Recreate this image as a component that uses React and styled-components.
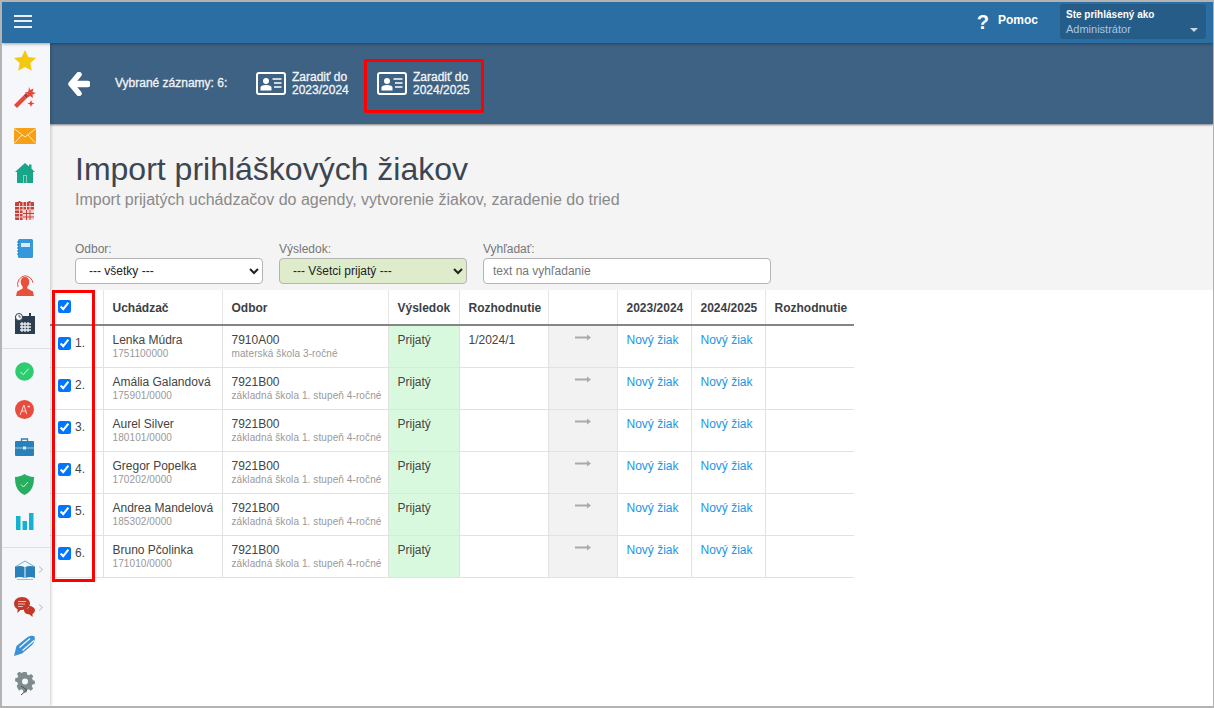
import styled, { createGlobalStyle } from "styled-components";

const GlobalStyle = createGlobalStyle`
    html, body {
        margin: 0;
        padding: 0;
        background: #fff;
        font-family: "Liberation Sans", Arial, sans-serif;
    }
`;

const Frame = styled.div`
    box-sizing: border-box;
    width: 1214px;
    height: 708px;
    border: 2px solid #b3b3b3;
    border-right-width: 1px;
    display: flex;
    flex-direction: column;
    overflow: hidden;
`;

const TopBar = styled.header`
    flex: 0 0 41px;
    background: #2b6ea4;
    display: flex;
    align-items: center;
    padding: 0 7px 0 12px;
    position: relative;
    z-index: 3;
    box-shadow: 0 1px 3px rgba(0, 0, 0, 0.35);
`;

const Burger = styled.div`
    width: 18px;
    display: flex;
    flex-direction: column;
    gap: 3.5px;
    margin-right: auto;
    margin-bottom: 3px;

    span {
        display: block;
        height: 2px;
        background: #e8f0f6;
    }
`;

const Help = styled.div`
    display: flex;
    align-items: center;
    gap: 9px;
    margin: 0 22px 5px 0;
    color: #fff;
    font-size: 12px;
    font-weight: bold;

    b {
        font-size: 20px;
        line-height: 20px;
        margin-top: 3px;
    }
`;

const UserBox = styled.div`
    box-sizing: border-box;
    width: 146px;
    height: 35px;
    margin-bottom: 2px;
    background: #255c88;
    border-radius: 3px;
    padding: 5px 6px;
    position: relative;
`;

const UserLabel = styled.div`
    color: #fff;
    font-size: 10px;
    font-weight: bold;
    line-height: 12px;
`;

const UserName = styled.div`
    color: #a9c6e4;
    font-size: 11px;
    line-height: 14px;
    margin-top: 1px;
`;

const Caret = styled.span`
    position: absolute;
    right: 8px;
    bottom: 7px;
    border-left: 4px solid transparent;
    border-right: 4px solid transparent;
    border-top: 4px solid #c6d6e4;
`;

const Body = styled.div`
    flex: 1;
    display: flex;
    min-height: 0;
`;

const Sidebar = styled.nav`
    flex: 0 0 48px;
    background: #f5f7fa;
    box-shadow: 1px 0 3px rgba(0, 0, 0, 0.2);
    position: relative;
    z-index: 2;
    display: flex;
    flex-direction: column;
    padding-top: 0;
    margin-top: -1px;
`;

const NavGroup = styled.div`
    display: flex;
    flex-direction: column;
    padding: ${(props) => props.$pad};
    border-bottom: ${(props) => (props.$last ? "none" : "1px solid #dcdfe2")};
`;

const NavItem = styled.div`
    height: ${(props) => props.$h || 37.5}px;
    display: flex;
    align-items: center;
    justify-content: center;
    padding-right: 3px;
    position: relative;
`;

const Chevron = styled.span`
    position: absolute;
    left: 35px;
    top: 50%;
    width: 4px;
    height: 4px;
    margin-top: -3px;
    border-top: 1px solid #c4c8cc;
    border-right: 1px solid #c4c8cc;
    transform: rotate(45deg);
`;

const Main = styled.main`
    flex: 1;
    min-width: 0;
    display: flex;
    flex-direction: column;
`;

const ActionBar = styled.div`
    flex: 0 0 81px;
    box-sizing: border-box;
    background: #3e6283;
    box-shadow: 0 1px 2px rgba(0, 0, 0, 0.5);
    position: relative;
    z-index: 1;
    display: flex;
    align-items: center;
    padding-left: 18px;
    color: #fff;
`;

const Selected = styled.div`
    width: 128px;
    font-size: 12px;
    margin-left: 25px;
    color: #f2f5f8;
    padding-bottom: 2px;
    -webkit-text-stroke: 0.3px #f2f5f8;
`;

const ActionButton = styled.div`
    box-sizing: border-box;
    width: 120px;
    height: 54px;
    display: flex;
    align-items: center;
    gap: 6px;
    padding: 0 0 5px 10px;
    margin: 5px 0 0 ${(props) => props.$offset || 0}px;
    border: 3px solid ${(props) => (props.$marked ? "#ff0000" : "transparent")};
    border-radius: 2px;
    font-size: 12px;
    line-height: 13px;
    color: #f2f5f8;
    -webkit-text-stroke: 0.3px #f2f5f8;
`;

const Intro = styled.section`
    flex: 0 0 166px;
    box-sizing: border-box;
    background: #f4f4f4;
    padding: 26px 0 0 25px;
    box-shadow: 0 1px 2px rgba(0, 0, 0, 0.25);
    position: relative;
`;

const Title = styled.h1`
    margin: 0;
    font-size: 32px;
    font-weight: normal;
    line-height: 38px;
    color: #3b4652;
`;

const Subtitle = styled.p`
    margin: 2px 0 0;
    font-size: 16px;
    line-height: 19px;
    color: #8a8a8a;
`;

const Filters = styled.div`
    display: flex;
    gap: 16px;
    margin-top: 33px;
`;

const Field = styled.label`
    display: flex;
    flex-direction: column;
    gap: 2px;
    font-size: 12px;
    line-height: 14px;
    color: #777;
`;

const Select = styled.select`
    box-sizing: border-box;
    width: 188px;
    height: 26px;
    padding-left: 9px;
    border: 1px solid #b4b4b4;
    border-radius: 4px;
    background: ${(props) => props.$bg || "#fff"};
    color: #222;
    font: 12px "Liberation Sans", Arial, sans-serif;
`;

const Search = styled.input`
    box-sizing: border-box;
    width: 288px;
    height: 26px;
    padding: 0 9px;
    border: 1px solid #b4b4b4;
    border-radius: 4px;
    background: #fff;
    font: 12px "Liberation Sans", Arial, sans-serif;

    &::placeholder {
        color: #777;
    }
`;

const TableWrap = styled.div`
    position: relative;
    flex: 1;
    background: #fff;
`;

const RedBox = styled.div`
    position: absolute;
    left: 2px;
    top: 0;
    width: 43px;
    height: 292px;
    box-sizing: border-box;
    border: 3px solid #ff0000;
    pointer-events: none;
`;

const Table = styled.table`
    border-collapse: collapse;
    table-layout: fixed;
    width: 804px;
    font-size: 12px;
    color: #444;
`;

const Th = styled.th`
    box-sizing: border-box;
    height: 35px;
    padding: 2px 0 0 9px;
    text-align: left;
    vertical-align: middle;
    font-size: 12px;
    color: #3b3f46;
    border-bottom: 2px solid #858585;
    border-left: 1px solid #e6e6e6;

    &:first-child {
        border-left: none;
        padding-left: 8px;
        vertical-align: top;
        padding-top: 10px;
    }
`;

const Td = styled.td`
    height: 42px;
    padding: 7px 0 0 9px;
    box-sizing: border-box;
    vertical-align: top;
    line-height: 15px;
    border-bottom: 1px solid #e2e2e2;
    border-left: 1px solid #e2e2e2;
    background: ${(props) => props.$bg || "transparent"};
`;

const CheckCell = styled.td`
    padding: 10px 0 0 8px;
    vertical-align: top;
    border-bottom: 1px solid #e2e2e2;
    color: #444;
    line-height: 15px;

    label {
        display: flex;
        align-items: center;
        gap: 4px;
    }
`;

const Check = styled.input`
    margin: 0;
    width: 13px;
    height: 13px;
`;

const Sub = styled.div`
    font-size: 10px;
    line-height: 11px;
    color: #999;
    letter-spacing: 0.1px;
`;

const NewLink = styled.a`
    color: #2196e3;
    text-decoration: none;
`;

const ArrowCell = styled.div`
    display: flex;
    justify-content: center;
    padding: 0 9px 0 0;
`;

const Star = () => (
    <svg width="22" height="21" viewBox="0 0 22 21"><path d="M11 0l3.3 7 7.7.9-5.700 5.200 1.500 7.600L11 17l-6.800 3.700 1.500-7.600L0 7.900 7.700 7z" fill="#f4c711" /></svg>
);

const Wand = () => (
    <svg width="22" height="21" viewBox="0 0 22 21">
        <path d="M0 18l9.500-9.500 3 3L3 21z" fill="#e8483a" />
        <path d="M9.500 8.500l2.500-2.500 3 3-2.500 2.500z" fill="#b23a30" />
        <path d="M15 0l1.200 3 3.300-1.500-1 3.500 3.500 1-3.500 1.500.5 3.500-3-2-2.700 1.500.5-3.300-3-1.700 3.500-.7z" fill="#e8483a" />
        <path d="M17 13l1 2.500 2.500 1-2.500 1-1 2.500-1-2.500-2.500-1 2.500-1z" fill="#e8483a" />
    </svg>
);

const Mail = () => (
    <svg width="22" height="16" viewBox="0 0 22 16">
        <rect width="22" height="16" fill="#f79f15" />
        <path d="M0 0.500l11 8.500 11-8.500M0 15.500l8-8.500M22 15.500l-8-8.500" stroke="#ffe9c4" strokeWidth="1" fill="none" />
    </svg>
);

const Home = () => (
    <svg width="20" height="20" viewBox="0 0 20 20">
        <path d="M10 0l4 3.500V1.500h2.500v4.200L20 9h-2v11H2V9H0z" fill="#17a689" />
        <rect x="8" y="12" width="4" height="8" fill="#7fd0bf" />
        <rect x="9" y="13" width="2" height="7" fill="#17a689" />
    </svg>
);

const Grid = () => (
    <svg width="19" height="19" viewBox="0 0 19 19">
        <rect y="1" width="19" height="18" rx="1" fill="#c8403a" />
        <rect x="8" y="9" width="11" height="10" fill="#f3d2cf" />
        <path d="M0 5.500h19M0 9h19M0 12.500h19M0 16h19M4.500 1v18M8 1v18M11.500 1v18M15 1v18" stroke="#f6d6d3" strokeWidth="1" />
        <path d="M8 12.500h11M8 16h11M11.500 9v10M15 9v10" stroke="#c8403a" strokeWidth="1" />
        <path d="M4.500 0v2M14.500 0v2" stroke="#c8403a" strokeWidth="2" />
    </svg>
);

const Notebook = () => (
    <svg width="16" height="19" viewBox="0 0 16 19">
        <rect x="1" width="15" height="19" rx="1.500" fill="#3498db" />
        <rect x="4" y="4" width="9" height="4" fill="#d6ebf9" />
        <path d="M0 3h2M0 6h2M0 9h2M0 12h2M0 15h2" stroke="#1d6fa8" strokeWidth="1" />
    </svg>
);

const Person = () => (
    <svg width="20" height="21" viewBox="0 0 20 21">
        <path d="M10 2c2.800 0 4.300 2.100 4.300 4.800 0 2.300-1 4-2 5v1.600l5.700 3 .9 4.600H1.100L2 16.400l5.700-3v-1.600c-1-1-2-2.700-2-5C5.700 4.100 7.200 2 10 2z" fill="#e8503e" />
        <path d="M3 12A8.500 8.500 0 0 1 10 .8a8.500 8.500 0 0 1 8 7" stroke="#e8503e" strokeWidth="1" fill="none" />
    </svg>
);

const Calendar = () => (
    <svg width="20" height="21" viewBox="0 0 20 21">
        <rect y="3" width="20" height="18" fill="#2c3e50" />
        <path d="M5 11h11M5 14h11M5 17h11M7 9v10M10 9v10M13 9v10" stroke="#e9edf0" strokeWidth="1.300" />
        <circle cx="4" cy="4" r="3.500" fill="#fff" stroke="#2c3e50" strokeWidth="1" />
        <path d="M4 2v2h2" stroke="#2c3e50" strokeWidth="0.800" fill="none" />
        <rect x="14" y="0" width="2" height="5" fill="#2c3e50" />
    </svg>
);

const CheckBadge = () => (
    <svg width="19" height="19" viewBox="0 0 19 19">
        <circle cx="9.500" cy="9.500" r="9.300" fill="#2ecc71" />
        <path d="M5.500 10l2.800 2.800 5.200-6" stroke="#d8f7e4" strokeWidth="1" fill="none" />
    </svg>
);

const GradeBadge = () => (
    <svg width="19" height="19" viewBox="0 0 19 19">
        <circle cx="9.500" cy="9.500" r="9.500" fill="#e74c3c" />
        <path d="M5 15l4-10 2.500 9M6.500 11h5" stroke="#fbdcd8" strokeWidth="1" fill="none" />
        <path d="M12.500 6.500h2.500" stroke="#fbdcd8" strokeWidth="1.500" />
    </svg>
);

const Briefcase = () => (
    <svg width="19" height="18" viewBox="0 0 19 18">
        <path d="M6.500 3V1h6v2" stroke="#2a80b9" strokeWidth="1.300" fill="none" />
        <rect y="3" width="19" height="15" rx="1" fill="#2a80b9" />
        <path d="M0 10h19" stroke="#bcdcf0" strokeWidth="0.800" />
        <rect x="8" y="8.500" width="3" height="3" fill="#d6e9f5" />
    </svg>
);

const Shield = () => (
    <svg width="19" height="21" viewBox="0 0 19 21">
        <path d="M9.500 0c2.500 1.800 5.500 2.800 9.500 3 0 8-1.500 14-9.500 18C1.500 17 0 11 0 3c4-.2 7-1.200 9.500-3z" fill="#27ae60" />
        <path d="M6 10.500l2.500 2.500 4.500-5" stroke="#d8f7e4" strokeWidth="1" fill="none" />
    </svg>
);

const Bars = () => (
    <svg width="18" height="17" viewBox="0 0 18 17">
        <rect y="3" width="4.500" height="14" fill="#12b2d0" />
        <rect x="6.500" y="8" width="4.500" height="9" fill="#12b2d0" />
        <rect x="13" width="4.500" height="17" fill="#12b2d0" />
    </svg>
);

const Book = () => (
    <svg width="22" height="20" viewBox="0 0 22 20">
        <path d="M1 7L11 1l10 6" stroke="#6aaedb" strokeWidth="1" fill="none" />
        <path d="M1 7c3-1.200 7-1.200 9.500 0v11C8 16.800 4 16.800 1 18zM21 7c-3-1.200-7-1.200-9.500 0v11c2.500-1.200 6.500-1.200 9.500 0z" fill="#2a80b9" />
        <path d="M3 19.500h16" stroke="#8cc1e4" strokeWidth="1" />
    </svg>
);

const Chat = () => (
    <svg width="21" height="21" viewBox="0 0 21 21">
        <path d="M8 0c4.400 0 8 2.900 8 6.500S12.400 13 8 13H6.500L3.500 16v-3.700C1.400 11.200 0 9 0 6.500 0 2.900 3.600 0 8 0z" fill="#c0392b" />
        <path d="M4 4.500h8M4 7h7M4 9.500h5" stroke="#eeb9b3" strokeWidth="1" />
        <path d="M15 9c3.300 0 6 1.900 6 4.300 0 1.500-1 2.800-2.500 3.600V20l-3-2.500c-3.100 0-5.500-1.900-5.500-4.200 0-.5.100-.9.300-1.300C13.500 12 15.500 11 15 9z" fill="#c0392b" />
    </svg>
);

const Pen = () => (
    <svg width="21" height="21" viewBox="0 0 21 21">
        <path d="M0 21L2.500 11 13 2.500C15.500.5 19 0 20.500 1.500c1 3-.5 6.500-3 9L8 18.500z" fill="#3a91d4" />
        <path d="M5.500 12.500L16 3.500M8.500 15.500L20 5.500" stroke="#f5f7fa" strokeWidth="1.300" />
    </svg>
);

const Gear = () => (
    <svg width="20" height="24" viewBox="0 0 20 24">
        <path d="M8 0h4l.6 3 2.200.9L17.400 2.300l2.800 2.800-1.600 2.600.9 2.300 2.500.6v4l-2.900.6-.9 2.200 1.700 2.600-2.800 2.800-2.600-1.700-2.100.9-.6 2.900H8l-.6-2.900-2.200-.9-2.600 1.700L-.2 17.100l1.700-2.600-.9-2.200L-2 11.700v-4l2.900-.6.900-2.200L.1 2.300 2.900-.5l2.600 1.700 2.100-.9z" fill="#7f8c8d" transform="translate(1.800 0) scale(0.82)" />
        <circle cx="10" cy="9.500" r="3" fill="#f5f7fa" />
        <path d="M6 14l6 4-6 5" stroke="#4a5560" strokeWidth="1" fill="none" />
    </svg>
);

const BackArrow = () => (
    <svg width="22" height="24" viewBox="0 0 22 24">
        <path d="M11 2.500L3 12l8 9.500" stroke="#fff" strokeWidth="5.500" strokeLinecap="round" strokeLinejoin="round" fill="none" />
        <path d="M5 12h14.500" stroke="#fff" strokeWidth="6.500" strokeLinecap="round" />
    </svg>
);

const IdCard = () => (
    <svg width="30" height="23" viewBox="0 0 30 23">
        <rect x="1" y="1" width="28" height="21" rx="2" fill="none" stroke="#fff" strokeWidth="2" />
        <circle cx="10" cy="9" r="3" fill="#fff" />
        <path d="M4.500 18.500v-3c0-1.500 2-2.500 5.500-2.500s5.500 1 5.500 2.500v3z" fill="#fff" />
        <path d="M16.500 7h9M18 11h7.500M18 15h7.500" stroke="#fff" strokeWidth="1.500" />
    </svg>
);

const ThinArrow = () => (
    <svg width="16" height="7" viewBox="0 0 16 7" style={{ marginTop: 1 }}>
        <path d="M0 3.500h14" stroke="#aaa" strokeWidth="2" />
        <path d="M12 0.500l4 3-4 3z" fill="#aaa" />
    </svg>
);

const students = [
    { name: "Lenka Múdra", id: "1751100000", code: "7910A00", field: "materská škola 3-ročné", decision: "1/2024/1" },
    { name: "Amália Galandová", id: "175901/0000", code: "7921B00", field: "základná škola 1. stupeň 4-ročné" },
    { name: "Aurel Silver", id: "180101/0000", code: "7921B00", field: "základná škola 1. stupeň 4-ročné" },
    { name: "Gregor Popelka", id: "170202/0000", code: "7921B00", field: "základná škola 1. stupeň 4-ročné" },
    { name: "Andrea Mandelová", id: "185302/0000", code: "7921B00", field: "základná škola 1. stupeň 4-ročné" },
    { name: "Bruno Pčolinka", id: "171010/0000", code: "7921B00", field: "základná škola 1. stupeň 4-ročné" },
];

const columns = [53, 119, 166, 71, 89, 69, 74, 74, 89];

export default function App() {
    return (
        <Frame>
            <GlobalStyle />
            <TopBar>
                <Burger><span /><span /><span /></Burger>
                <Help><b>?</b> Pomoc</Help>
                <UserBox>
                    <UserLabel>Ste prihlásený ako</UserLabel>
                    <UserName>Administrátor</UserName>
                    <Caret />
                </UserBox>
            </TopBar>
            <Body>
                <Sidebar>
                    <NavGroup $pad="0 0 6px">
                        <NavItem $h={36}><Star /></NavItem>
                        <NavItem $h={39}><Wand /></NavItem>
                        <NavItem><Mail /></NavItem>
                        <NavItem><Home /></NavItem>
                        <NavItem><Grid /></NavItem>
                        <NavItem><Notebook /></NavItem>
                        <NavItem><Person /></NavItem>
                        <NavItem><Calendar /></NavItem>
                    </NavGroup>
                    <NavGroup $pad="4px 0 6px">
                        <NavItem><CheckBadge /></NavItem>
                        <NavItem><GradeBadge /></NavItem>
                        <NavItem><Briefcase /></NavItem>
                        <NavItem><Shield /></NavItem>
                        <NavItem><Bars /></NavItem>
                    </NavGroup>
                    <NavGroup $pad="4px 0 0" $last>
                        <NavItem><Book /><Chevron /></NavItem>
                        <NavItem><Chat /><Chevron /></NavItem>
                        <NavItem><Pen /></NavItem>
                        <NavItem $h={39}><Gear /></NavItem>
                    </NavGroup>
                </Sidebar>
                <Main>
                    <ActionBar>
                        <BackArrow />
                        <Selected>Vybrané záznamy: 6:</Selected>
                        <ActionButton>
                            <IdCard />
                            <span>Zaradiť do<br />2023/2024</span>
                        </ActionButton>
                        <ActionButton $marked $offset={1}>
                            <IdCard />
                            <span>Zaradiť do<br />2024/2025</span>
                        </ActionButton>
                    </ActionBar>
                    <Intro>
                        <Title>Import prihláškových žiakov</Title>
                        <Subtitle>Import prijatých uchádzačov do agendy, vytvorenie žiakov, zaradenie do tried</Subtitle>
                        <Filters>
                            <Field>
                                Odbor:
                                <Select defaultValue="all">
                                    <option value="all">--- všetky ---</option>
                                </Select>
                            </Field>
                            <Field>
                                Výsledok:
                                <Select $bg="#dfeccb" defaultValue="ok">
                                    <option value="ok">--- Všetci prijatý ---</option>
                                </Select>
                            </Field>
                            <Field>
                                Vyhľadať:
                                <Search placeholder="text na vyhľadanie" />
                            </Field>
                        </Filters>
                    </Intro>
                    <TableWrap>
                        <Table>
                            <colgroup>
                                {columns.map((w, i) => <col key={i} width={w} />)}
                            </colgroup>
                            <thead>
                                <tr>
                                    <Th><Check type="checkbox" defaultChecked /></Th>
                                    <Th>Uchádzač</Th>
                                    <Th>Odbor</Th>
                                    <Th>Výsledok</Th>
                                    <Th>Rozhodnutie</Th>
                                    <Th />
                                    <Th>2023/2024</Th>
                                    <Th>2024/2025</Th>
                                    <Th>Rozhodnutie</Th>
                                </tr>
                            </thead>
                            <tbody>
                                {students.map((s, i) => (
                                    <tr key={s.name}>
                                        <CheckCell>
                                            <label><Check type="checkbox" defaultChecked />{i + 1}.</label>
                                        </CheckCell>
                                        <Td>{s.name}<Sub>{s.id}</Sub></Td>
                                        <Td>{s.code}<Sub>{s.field}</Sub></Td>
                                        <Td $bg="#d9f9df">Prijatý</Td>
                                        <Td>{s.decision}</Td>
                                        <Td $bg="#f2f2f2"><ArrowCell><ThinArrow /></ArrowCell></Td>
                                        <Td><NewLink href="#">Nový žiak</NewLink></Td>
                                        <Td><NewLink href="#">Nový žiak</NewLink></Td>
                                        <Td />
                                    </tr>
                                ))}
                            </tbody>
                        </Table>
                        <RedBox />
                    </TableWrap>
                </Main>
            </Body>
        </Frame>
    );
}
